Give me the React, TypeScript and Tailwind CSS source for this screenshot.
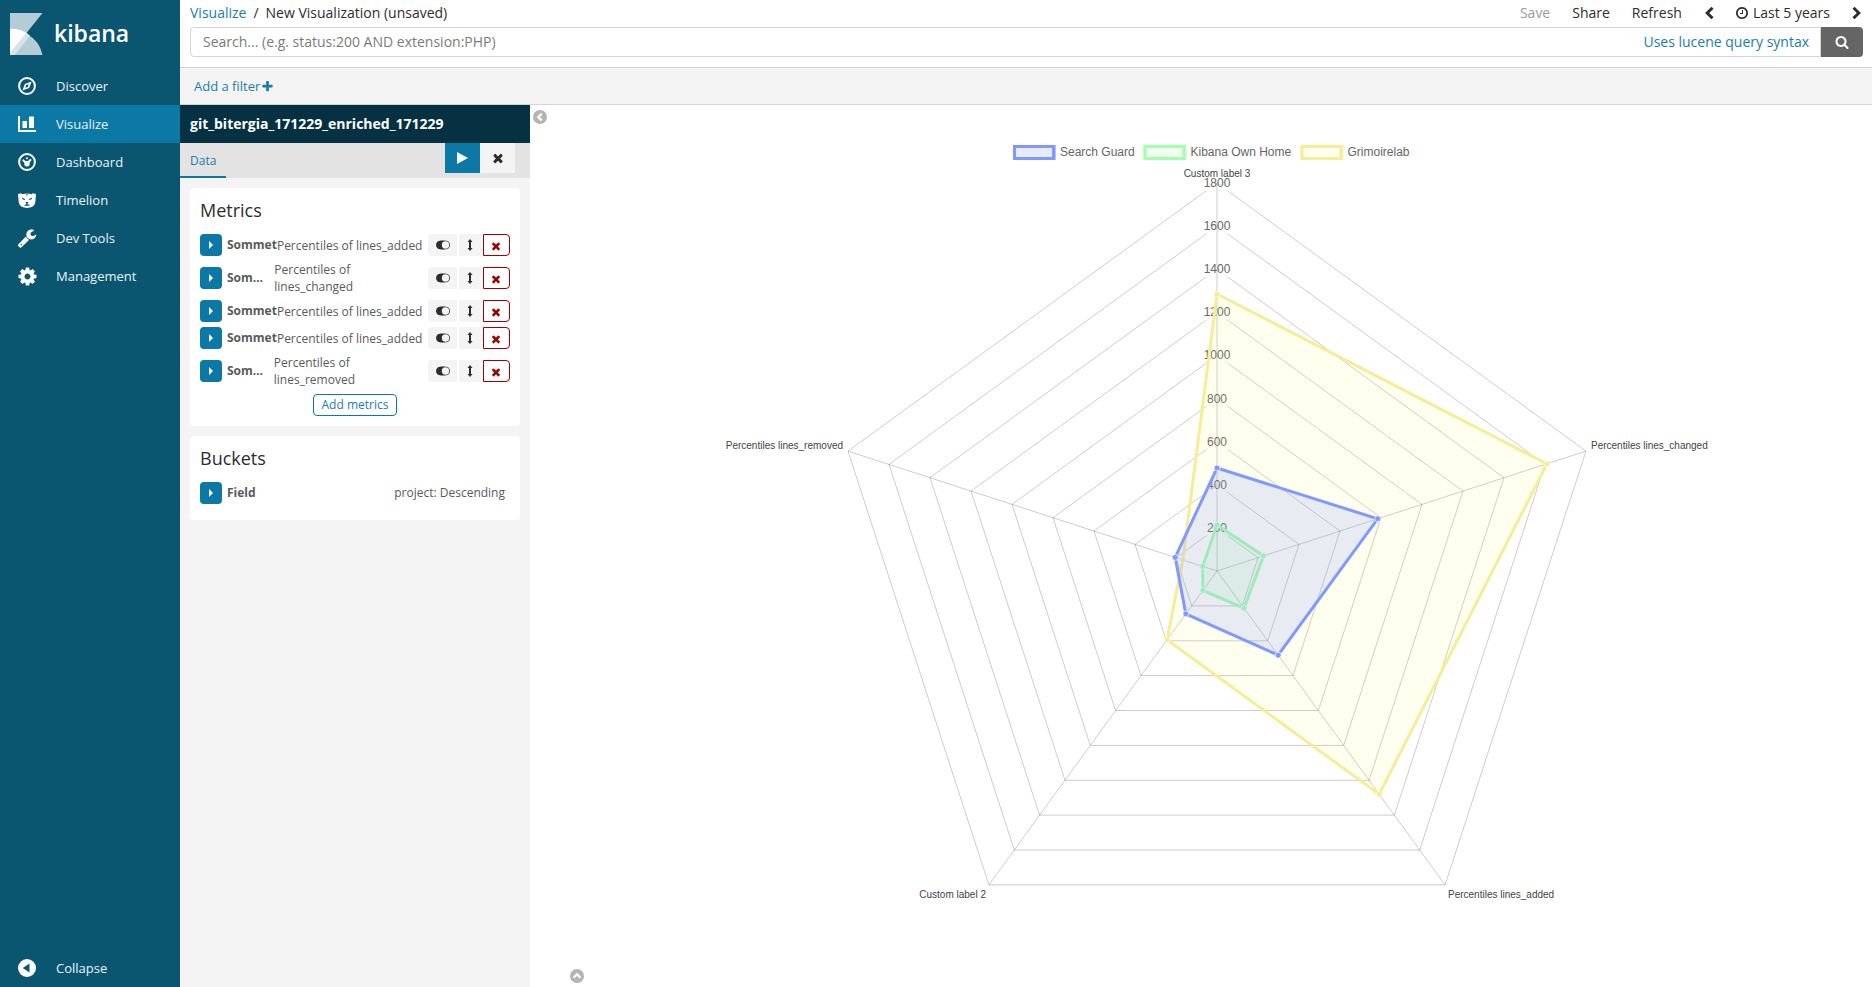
import React from 'react';

const FA = {
  times:
    'M1490 1322q0 40-28 68l-136 136q-28 28-68 28t-68-28l-294-294-294 294q-28 28-68 28t-68-28l-136-136q-28-28-28-68t28-68l294-294-294-294q-28-28-28-68t28-68l136-136q28-28 68-28t68 28l294 294 294-294q28-28 68-28t68 28l136 136q28 28 28 68t-28 68l-294 294 294 294q28 28 28 68z',
  plus:
    'M1600 736v192q0 40-28 68t-68 28h-416v416q0 40-28 68t-68 28h-192q-40 0-68-28t-28-68v-416h-416q-40 0-68-28t-28-68v-192q0-40 28-68t68-28h416v-416q0-40 28-68t68-28h192q40 0 68 28t28 68v416h416q40 0 68 28t28 68z',
  search:
    'M1216 832q0-185-131.5-316.5t-316.5-131.5-316.5 131.5-131.5 316.5 131.5 316.5 316.5 131.5 316.5-131.5 131.5-316.5zm512 832q0 52-38 90t-90 38q-54 0-90-38l-343-342q-179 124-399 124-143 0-273.5-55.5t-225-150-150-225-55.5-273.5 55.5-273.5 150-225 225-150 273.5-55.5 273.5 55.5 225 150 150 225 55.5 273.5q0 220-124 399l343 343q37 37 37 90z',
  clock:
    'M1024 544v448q0 14-9 23t-23 9h-320q-14 0-23-9t-9-23v-64q0-14 9-23t23-9h224v-352q0-14 9-23t23-9h64q14 0 23 9t9 23zm416 352q0-148-73-273t-198-198-273-73-273 73-198 198-73 273 73 273 198 198 273 73 273-73 198-198 73-273zm224 0q0 209-103 385.5t-279.5 279.5-385.5 103-385.5-103-279.5-279.5-103-385.5 103-385.5 279.5-279.5 385.5-103 385.5 103 279.5 279.5 103 385.5z',
  wrench:
    'M448 1472q0-26-19-45t-45-19-45 19-19 45 19 45 45 19 45-19 19-45zm644-420l-682 682q-37 37-90 37-52 0-91-37l-106-108q-38-36-38-90 0-53 38-91l681-681q39 98 114.5 173.5t173.5 114.5zm634-435q0 39-23 106-47 134-164.5 217.5t-258.5 83.5q-185 0-316.5-131.5t-131.5-316.5 131.5-316.5 316.5-131.5q58 0 121.5 16.5t107.5 46.5q16 11 16 28t-16 28l-293 169v224l193 107q5-3 79-48.5t135.5-81 70.5-35.5q15 0 23.5 10t8.5 25z',
  cog:
    'M1152 896q0-106-75-181t-181-75-181 75-75 181 75 181 181 75 181-75 75-181zm512-109v222q0 12-8 23t-20 13l-185 28q-19 54-39 91 35 50 107 138 10 12 10 25t-9 23q-27 37-99 108t-94 71q-12 0-26-9l-138-108q-44 23-91 38-16 136-29 186-7 28-36 28h-222q-14 0-24.5-8.5t-11.5-21.5l-28-184q-49-16-90-37l-141 107q-10 9-25 9-14 0-25-11-126-114-165-168-7-10-7-23 0-12 8-23 15-21 51-66.5t54-70.5q-27-50-41-99l-183-27q-13-2-21-12.5t-8-23.5v-222q0-12 8-23t19-13l186-28q14-46 39-92-40-57-107-138-10-12-10-24 0-10 9-23 26-36 98.5-107.5t94.5-71.5q13 0 26 10l138 107q44-23 91-38 16-136 29-186 7-28 36-28h222q14 0 24.5 8.5t11.5 21.5l28 184q49 16 90 37l142-107q9-9 24-9 13 0 25 10 129 119 165 170 7 8 7 22 0 12-8 23-15 21-51 66.5t-54 70.5q26 50 41 98l183 28q13 2 21 12.5t8 23.5z',
};

function Glyph({ name, className }: { name: keyof typeof FA; className: string }) {
  return (
    <svg viewBox="0 0 1792 1792" className={className} fill="currentColor" aria-hidden="true">
      <path d={FA[name]} />
    </svg>
  );
}

function Chevron({ dir }: { dir: 'left' | 'right' }) {
  return (
    <svg viewBox="0 0 10 14" className="h-[14px] w-[10px]" fill="none" stroke="currentColor" strokeWidth="3" aria-hidden="true">
      <path d={dir === 'left' ? 'M8.5 1.8 3.2 7l5.3 5.2' : 'M1.5 1.8 6.8 7l-5.3 5.2'} />
    </svg>
  );
}

function CircleChevron({ dir }: { dir: 'left' | 'up' }) {
  return (
    <svg viewBox="0 0 14 14" className="size-[14px]" aria-hidden="true">
      <circle cx="7" cy="7" r="7" fill="#b4b4b4" />
      <path d={dir === 'left' ? 'M8.8 3.6 5.2 7l3.6 3.4' : 'M3.6 8.8 7 5.2l3.4 3.6'} fill="none" stroke="#fff" strokeWidth="2.2" />
    </svg>
  );
}

function KibanaMark() {
  return (
    <svg viewBox="0 0 33 42" className="h-[42px] w-[33px]" aria-hidden="true">
      <path d="M0 0H32.5L16 20.5Q30 28 32.5 42H0Z" fill="#b4ccd5" />
      <path d="M0 15.8Q9 15.5 16.5 19.8L0 40.5Z" fill="#fff" />
      <path d="M16.5 19.8 20 22.5 5 42H0V40.5Z" fill="#d8e4e9" />
    </svg>
  );
}

const navIcons: Record<string, React.ReactNode> = {
  Discover: (
    <svg viewBox="0 0 18 18" className="size-[18px]" aria-hidden="true">
      <circle cx="9" cy="9" r="7.9" fill="none" stroke="#fff" strokeWidth="2" />
      <path d="M13.6 4.4 11.2 10.9 4.4 13.6 6.9 7Z" fill="#fff" />
      <path d="M10.7 7.2 9.9 9.9 7.3 10.8 8.2 8.1Z" fill="#0a5671" />
    </svg>
  ),
  Visualize: (
    <svg viewBox="0 0 18 16" className="h-4 w-[18px]" fill="#fff" aria-hidden="true">
      <path d="M0 0H2V14H18V16H0ZM4.5 5H9V12H4.5ZM11 0.5H16V12H11Z" />
    </svg>
  ),
  Dashboard: (
    <svg viewBox="0 0 18 18" className="size-[18px]" aria-hidden="true">
      <circle cx="9" cy="9" r="7.9" fill="none" stroke="#fff" strokeWidth="2" />
      <circle cx="9" cy="10.8" r="2.7" fill="#fff" />
      <path d="M5.4 7.4 9 10.5M9.2 10.5 12.4 7" stroke="#fff" strokeWidth="2" strokeLinecap="round" />
      <circle cx="9" cy="5.2" r="1" fill="#fff" />
    </svg>
  ),
  Timelion: (
    <svg viewBox="0 0 18 15" className="h-[15px] w-[18px]" aria-hidden="true">
      <path d="M0 1 3.2 0.3 4.5 1.2Q9-.4 13.5 1.2L14.8.3 18 1 17.3 9Q16.5 13.2 13 14.2L9 15 5 14.2Q1.5 13.2.7 9Z" fill="#fff" />
      <path d="M4 4.6 7.2 6.2 6.6 7 4.4 6.2ZM14 4.6 10.8 6.2 11.4 7 13.6 6.2ZM7.4 9H10.6L9.6 10.8V11.6H11.4V12.7H6.6V11.6H8.4V10.8Z" fill="#0a5671" />
      <path d="M7.8 1.2H10.2L9 2.8Z" fill="#0a5671" />
    </svg>
  ),
  'Dev Tools': <Glyph name="wrench" className="size-5" />,
  Management: <Glyph name="cog" className="size-[21px]" />,
};

function Sidebar() {
  return (
    <aside className="flex w-[180px] shrink-0 flex-col bg-[#0a5671] text-[13px] text-white">
      <a href="#" className="flex h-[67px] items-center gap-[11px] pl-[10px]">
        <KibanaMark />
        <span className="text-[23px] font-semibold">kibana</span>
      </a>
      <nav className="flex flex-1 flex-col">
        {Object.keys(navIcons).map((label) => (
          <a
            key={label}
            href="#"
            className={
              label === 'Visualize'
                ? 'flex h-[38px] items-center bg-[#0c78a6] pl-4 text-[#ecf3f6]'
                : 'flex h-[38px] items-center pl-4 text-[#ecf3f6]'
            }
          >
            <span className="flex w-[22px] justify-center text-white">{navIcons[label]}</span>
            <span className="ml-[18px]">{label}</span>
          </a>
        ))}
        <button type="button" className="mt-auto flex h-[38px] items-center pl-4 text-[#ecf3f6]">
          <span className="flex w-[22px] justify-center">
            <svg viewBox="0 0 18 18" className="size-[18px]" aria-hidden="true">
              <circle cx="9" cy="9" r="9" fill="#fff" />
              <path d="M11.5 4.5V13.5L4.8 9Z" fill="#0a5671" />
            </svg>
          </span>
          <span className="ml-[18px]">Collapse</span>
        </button>
      </nav>
    </aside>
  );
}

function TopBar() {
  return (
    <header className="border-b border-[#d4d4d4] pr-[9px] pb-[10px] pl-[10px]">
      <div className="flex h-[27px] items-center justify-between pr-px pb-[2px]">
        <div className="flex gap-[7px]">
          <a href="#" className="text-[#1a7ea9]">Visualize</a>
          <span>/</span>
          <span>New Visualization (unsaved)</span>
        </div>
        <div className="flex items-center">
          <button type="button" disabled className="text-[#9c9c9c]">Save</button>
          <button type="button" className="ml-[22px]">Share</button>
          <button type="button" className="ml-[22px]">Refresh</button>
          <button type="button" aria-label="Previous period" className="ml-[22px]"><Chevron dir="left" /></button>
          <button type="button" className="ml-[21px] flex items-center gap-1">
            <Glyph name="clock" className="size-[14px]" />
            Last 5 years
          </button>
          <button type="button" aria-label="Next period" className="ml-[22px]"><Chevron dir="right" /></button>
        </div>
      </div>
      <form className="flex h-[30px]" onSubmit={(e) => e.preventDefault()}>
        <div className="flex flex-1 items-center rounded-l border border-[#d4d4d4] pr-[11px] pl-3">
          <input
            type="text"
            aria-label="Search"
            placeholder="Search... (e.g. status:200 AND extension:PHP)"
            className="min-w-0 flex-1 outline-none placeholder:text-[#7b7b7b]"
          />
          <a href="#" className="text-[#1a7ea9]">Uses lucene query syntax</a>
        </div>
        <button type="submit" aria-label="Run search" className="flex w-[42px] items-center justify-center rounded-r bg-[#656565] text-white">
          <Glyph name="search" className="size-[14px]" />
        </button>
      </form>
    </header>
  );
}

function ExpandButton({ label }: { label: string }) {
  return (
    <button type="button" aria-label={label} className="flex size-[22px] shrink-0 items-center justify-center rounded bg-[#0c78a6]">
      <svg viewBox="0 0 4 8" className="h-2 w-1" fill="#fff" aria-hidden="true">
        <path d="M0 0 4 4 0 8Z" />
      </svg>
    </button>
  );
}

function MetricRow({ text }: { text: string }) {
  return (
    <li className="flex items-center">
      <ExpandButton label={`Expand ${text}`} />
      <div className="ml-[5px] flex min-w-0 flex-1 items-center pr-1 text-[#5a5a5a]">
        <span className="truncate font-bold">Sommet</span>
        <span className="leading-[17px]">{text}</span>
      </div>
      <div className="flex shrink-0 gap-[2px] text-[#2d2d2d]">
        <button type="button" aria-label="Toggle metric" className="flex h-[22px] w-[29px] items-center justify-center rounded-l bg-[#f4f4f4]">
          <svg viewBox="0 0 14 10" className="h-[10px] w-[14px]" aria-hidden="true">
            <rect x="0.5" y="1" width="13" height="8" rx="4" fill="currentColor" stroke="currentColor" />
            <circle cx="9.5" cy="5" r="3.7" fill="#f4f4f4" />
          </svg>
        </button>
        <button type="button" aria-label="Move metric" className="flex h-[22px] w-[22px] items-center justify-center bg-[#f4f4f4]">
          <svg viewBox="0 0 6 12" className="h-3 w-[6px]" fill="currentColor" aria-hidden="true">
            <path d="M3 0 5.5 3H4V9H5.5L3 12 .5 9H2V3H.5Z" />
          </svg>
        </button>
        <button type="button" aria-label="Remove metric" className="flex h-[22px] w-[27px] items-center justify-center rounded-r border border-[#a30000] bg-white pt-[2px] pr-px text-[#a30000]">
          <Glyph name="times" className="size-3" />
        </button>
      </div>
    </li>
  );
}

const metrics = [
  'Percentiles of lines_added',
  'Percentiles of lines_changed',
  'Percentiles of lines_added',
  'Percentiles of lines_added',
  'Percentiles of lines_removed',
];

function Editor() {
  return (
    <section className="w-[350px] shrink-0 bg-[#f4f4f4] text-xs">
      <h1 className="flex h-[38px] items-center bg-[#053142] px-[10px] text-sm font-bold text-white">
        git_bitergia_171229_enriched_171229
      </h1>
      <div className="flex h-[35px] items-start justify-between bg-[#e3e3e3] pr-[15px]">
        <button type="button" className="h-full border-b-2 border-[#0c78a6] px-[10px] pt-[2px] text-[#1a7ea9]">Data</button>
        <div className="flex">
          <button type="button" aria-label="Apply changes" className="flex h-[30px] w-[35px] items-center justify-center bg-[#0c78a6]">
            <svg viewBox="0 0 11 12" className="h-3 w-[11px]" fill="#fff" aria-hidden="true">
              <path d="M0 0 11 6 0 12Z" />
            </svg>
          </button>
          <button type="button" aria-label="Discard changes" className="flex h-[30px] w-[35px] items-center justify-center bg-[#f4f4f4] text-[#2d2d2d]">
            <Glyph name="times" className="size-[14px]" />
          </button>
        </div>
      </div>
      <div className="flex flex-col gap-[10px] p-[10px]">
        <div className="rounded bg-white p-[10px]">
          <h2 className="mb-[11px] text-lg leading-[25px] text-[#2d2d2d]">Metrics</h2>
          <ul className="flex flex-col gap-[5px]">
            {metrics.map((text, i) => (
              <MetricRow key={i} text={text} />
            ))}
          </ul>
          <div className="mt-[6px] flex justify-center">
            <button type="button" className="h-[22px] rounded border border-[#0c78a6] px-2 leading-5 text-[#1a7ea9]">Add metrics</button>
          </div>
        </div>
        <div className="rounded bg-white p-[10px] pb-4">
          <h2 className="mb-[11px] text-lg leading-[25px] text-[#2d2d2d]">Buckets</h2>
          <div className="flex items-center text-[#5a5a5a]">
            <ExpandButton label="Expand field" />
            <span className="ml-[5px] font-bold">Field</span>
            <span className="ml-auto pr-[5px]">project: Descending</span>
          </div>
        </div>
      </div>
    </section>
  );
}

const CX = 657;
const CY = 466;
const RADIUS = 388;

function at(axis: number, r: number): [number, number] {
  const a = (axis * 2 * Math.PI) / 5;
  return [CX + r * Math.sin(a), CY - r * Math.cos(a)];
}

function ring(radii: number[]) {
  return radii.map((r, i) => at(i, r).map((v) => v.toFixed(1)).join(',')).join(' ');
}

const series = [
  { name: 'Grimoirelab', x: 739.5, line: '#f7ec97', fill: 'rgba(255,255,51,0.08)', radii: [277, 347, 276, 85, 36] },
  { name: 'Kibana Own Home', x: 582.5, line: '#a4ffab', fill: 'rgba(120,255,120,0.1)', radii: [46, 49, 46, 24, 15] },
  { name: 'Search Guard', x: 452, line: '#8099ff', fill: 'rgba(126,143,255,0.18)', radii: [103, 169, 104, 53, 44] },
];

function RadarChart() {
  const rings = Array.from({ length: 9 }, (_, i) => i + 1);
  return (
    <svg viewBox="0 0 1312 850" className="h-auto w-full font-['Liberation_Sans',Arial,sans-serif]" role="img" aria-label="Radar chart of percentiles by project">
      {series.map((s) => (
        <g key={s.name}>
          <rect x={s.x + 1} y="40" width="43" height="15" fill={s.line} fillOpacity="0.6" />
          <rect x={s.x + 3} y="42" width="38" height="11" fill="#fff" />
          <rect x={s.x + 2.5} y="41.5" width="39" height="12" fill={s.fill} stroke={s.line} strokeWidth="3" />
          <text x={s.x + 48} y="51" fontSize="12" fill="#666">{s.name}</text>
        </g>
      ))}
      {rings.map((n) => {
        const y = CY - (RADIUS * n) / 9;
        return (
          <g key={n}>
            <polygon points={ring(Array(5).fill((RADIUS * n) / 9))} fill="none" stroke="#000" strokeOpacity="0.2" />
            <rect x={CX - (n > 4 ? 15 : 12)} y={y - 8} width={n > 4 ? 30 : 24} height="16" fill="#fff" fillOpacity="0.8" />
            <text x={CX} y={y + 4} fontSize="12" textAnchor="middle" fill="#666">{n * 200}</text>
          </g>
        );
      })}
      {[0, 1, 2, 3, 4].map((i) => {
        const [x, y] = at(i, RADIUS);
        return <line key={i} x1={CX} y1={CY} x2={x} y2={y} stroke="#000" strokeOpacity="0.2" />;
      })}
      <g fontSize="10" fill="#444">
        <text x={CX} y="72" textAnchor="middle">Custom label 3</text>
        <text x="1031" y="344">Percentiles lines_changed</text>
        <text x="888" y="793">Percentiles lines_added</text>
        <text x="426" y="793" textAnchor="end">Custom label 2</text>
        <text x="283" y="344" textAnchor="end">Percentiles lines_removed</text>
      </g>
      {series.map((s) => (
        <g key={s.name}>
          <polygon points={ring(s.radii)} fill={s.fill} stroke={s.line} strokeWidth="3" />
          {s.radii.map((r, i) => {
            const [x, y] = at(i, r);
            return <circle key={i} cx={x} cy={y} r="3" fill={s.line} stroke="#fff" strokeOpacity="0.7" />;
          })}
        </g>
      ))}
    </svg>
  );
}

export default function App() {
  return (
    <div className="flex min-h-screen bg-white font-['Open_Sans','Noto_Sans',sans-serif] text-sm text-[#2d2d2d]">
      <Sidebar />
      <div className="flex min-w-0 flex-1 flex-col">
        <TopBar />
        <div className="flex h-[37px] items-center border-b border-[#d4d4d4] bg-[#f4f4f4] px-[14px] text-[13px]">
          <button type="button" className="flex items-center gap-px text-[#1a7ea9]">
            Add a filter
            <Glyph name="plus" className="size-[13px]" />
          </button>
        </div>
        <main className="flex flex-1">
          <Editor />
          <div className="flex min-w-0 flex-1 items-start">
            <button type="button" aria-label="Hide editor" className="mt-[5px] w-[30px] shrink-0 pl-[3px]">
              <CircleChevron dir="left" />
            </button>
            <div className="flex min-w-0 flex-1 flex-col self-stretch">
              <RadarChart />
              <button type="button" aria-label="Show table" className="mt-auto mb-1 self-start pl-[10px]">
                <CircleChevron dir="up" />
              </button>
            </div>
          </div>
        </main>
      </div>
    </div>
  );
}
